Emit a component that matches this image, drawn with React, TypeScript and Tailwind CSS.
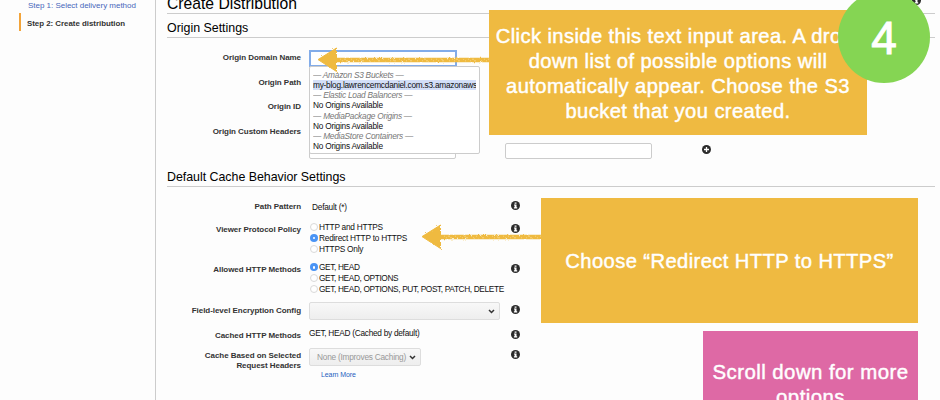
import type { ReactNode } from "react";

function InfoIcon() {
  return (
    <svg className="block h-[9px] w-[9px] shrink-0" viewBox="0 0 18 18" aria-hidden="true">
      <circle cx="9" cy="9" r="9" fill="#2b2b2b" />
      <path d="M7.2 2.8h3.8v2.8H7.2zM6 7h5v5.6h1.4v2.2H5.8v-2.2h1.4V9.2H6z" fill="#fff" />
    </svg>
  );
}

function PlusIcon() {
  return (
    <svg className="block h-[9px] w-[9px] shrink-0" viewBox="0 0 18 18" aria-hidden="true">
      <circle cx="9" cy="9" r="9" fill="#2b2b2b" />
      <path d="M9 4v10M4 9h10" stroke="#fff" strokeWidth="2.6" />
    </svg>
  );
}

function Chevron() {
  return (
    <svg className="block h-[5px] w-[7px] shrink-0" viewBox="0 0 7 5" aria-hidden="true">
      <path d="M1 1l2.5 2.5L6 1" fill="none" stroke="#333" strokeWidth="1.5" />
    </svg>
  );
}

function Row({
  label,
  height,
  info = false,
  children,
}: {
  label: ReactNode;
  height: string;
  info?: boolean;
  children?: ReactNode;
}) {
  return (
    <div className={`flex items-start ${height}`}>
      <div className="w-[134px] shrink-0 pt-[0.5px] text-right text-[8px] font-bold leading-[10px] tracking-[-0.05px] text-[#333]">
        {label}
      </div>
      <div className="ml-2 w-[202px] shrink-0">{children}</div>
      {info && <InfoIcon />}
    </div>
  );
}

function Radio({ label, checked = false }: { label: string; checked?: boolean }) {
  return (
    <div className="flex h-[10.7px] items-center whitespace-nowrap">
      {checked ? (
        <span className="flex h-2 w-2 shrink-0 items-center justify-center rounded-full bg-[#4a94f5]">
          <span className="h-[2.5px] w-[2.5px] rounded-full bg-white" />
        </span>
      ) : (
        <span className="h-2 w-2 shrink-0 rounded-full border border-[#d9d9d9] bg-white" />
      )}
      <span className="ml-px">{label}</span>
    </div>
  );
}

function RoughArrow({ className, width }: { className: string; width: number }) {
  return (
    <svg className={className} width={width} height="28" viewBox={`0 0 ${width} 28`} aria-hidden="true">
      <filter id={`rough-${width}`} x="-5%" y="-10%" width="110%" height="120%">
        <feTurbulence type="fractalNoise" baseFrequency="0.45" numOctaves="2" seed="4" />
        <feDisplacementMap in="SourceGraphic" scale="2.5" />
      </filter>
      <g filter={`url(#rough-${width})`}>
        <path d={`M17 15H${width}`} stroke="#efba41" strokeWidth="4.4" />
        <path d="M2 14.6L20.5 3V26.5Z" fill="#efba41" stroke="#efba41" strokeLinejoin="round" />
        <path
          d={`M24 14.2H${width}M26 15.8H${width}`}
          stroke="#fff3d0"
          strokeWidth="0.6"
          strokeDasharray="1 3 2 5 1 4"
          opacity="0.7"
        />
      </g>
    </svg>
  );
}

const origins = [
  { group: "Amazon S3 Buckets", value: "my-blog.lawrencemcdaniel.com.s3.amazonaws.com", active: true },
  { group: "Elastic Load Balancers", value: "No Origins Available", active: false },
  { group: "MediaPackage Origins", value: "No Origins Available", active: false },
  { group: "MediaStore Containers", value: "No Origins Available", active: false },
];

export default function App() {
  return (
    <div className="relative flex h-[400px] w-[940px] overflow-hidden bg-[#fdfdfd] font-['Liberation_Sans',Arial,sans-serif] text-[8.3px] leading-[10px] tracking-[-0.24px] text-[#111]">
      <aside className="w-[156px] shrink-0 border-r border-[#ccc] pl-[19px]">
        <div className="h-[13px] pl-[9px] pt-px text-[8px] tracking-[-0.02px] text-[#4767bb]">
          Step 1: Select delivery method
        </div>
        <div className="flex h-[18px] items-center border-l-2 border-[#f3a43a] pl-[6px] pt-[3px] text-[7.9px] font-bold tracking-[-0.02px] text-[#333]">
          Step 2: Create distribution
        </div>
      </aside>

      <main className="w-[779px] shrink-0 pl-[11px]">
        <h1 className="flex h-[14px] items-end border-b border-[#ccc] text-[15.7px] leading-[18px] tracking-normal text-black">
          Create Distribution
        </h1>
        <h2 className="h-[24px] border-b border-[#ccc] pt-[5px] text-[12.4px] leading-[18px] tracking-normal text-black">
          Origin Settings
        </h2>

        <div className="pt-[14px]">
          <Row label="Origin Domain Name" height="h-[25px]">
            <div className="-mt-[2px] h-[17px] w-[148px] border-2 border-[#82ace9] bg-white" />
          </Row>
          <Row label="Origin Path" height="h-[24px]" />
          <Row label="Origin ID" height="h-[25px]" />
          <div className="flex h-[33px] items-start">
            <div className="w-[134px] shrink-0 pt-[0.5px] text-right text-[8px] font-bold tracking-[-0.05px] text-[#333]">
              Origin Custom Headers
            </div>
            <div className="ml-2 mt-[17px] flex items-center">
              <div className="h-4 w-[147px] rounded-[2px] border border-[#ccc] bg-white" />
              <div className="ml-[49px] h-4 w-[147px] rounded-[2px] border border-[#ccc] bg-white" />
              <div className="-mt-[3px] ml-[50px]">
                <PlusIcon />
              </div>
            </div>
          </div>
        </div>

        <h2 className="h-[28px] border-b border-[#ccc] pt-[9px] text-[12.4px] leading-[18px] tracking-[-0.02px] text-black">
          Default Cache Behavior Settings
        </h2>

        <div className="pt-[14px]">
          <Row label="Path Pattern" height="h-[23px]" info>
            <div className="pl-[3px] pt-px">Default (*)</div>
          </Row>
          <Row label="Viewer Protocol Policy" height="h-[40px]" info>
            <div className="-mt-[2px] pl-px">
              <Radio label="HTTP and HTTPS" />
              <Radio label="Redirect HTTP to HTTPS" checked />
              <Radio label="HTTPS Only" />
            </div>
          </Row>
          <Row label="Allowed HTTP Methods" height="h-[41px]" info>
            <div className="-mt-[2px] pl-px tracking-[-0.36px]">
              <Radio label="GET, HEAD" checked />
              <Radio label="GET, HEAD, OPTIONS" />
              <Radio label="GET, HEAD, OPTIONS, PUT, POST, PATCH, DELETE" />
            </div>
          </Row>
          <Row label="Field-level Encryption Config" height="h-[25px]" info>
            <div className="-mt-[3px] flex h-[18px] w-[191px] items-center justify-end rounded-[2px] border border-[#ddd] bg-gradient-to-b from-[#f8f8f8] to-[#eee] pr-[4px] pt-px">
              <Chevron />
            </div>
          </Row>
          <Row label="Cached HTTP Methods" height="h-[20px]" info>
            <div className="-mt-[2px] tracking-[-0.28px]">GET, HEAD (Cached by default)</div>
          </Row>
          <Row
            label={
              <>
                Cache Based on Selected
                <br />
                Request Headers
              </>
            }
            height="h-[50px]"
            info
          >
            <div className="-mt-[2px] flex h-[18px] w-[112px] items-center justify-between rounded-[2px] border border-[#ddd] bg-gradient-to-b from-[#f8f8f8] to-[#eee] pl-[7px] pr-[4px] text-[#999]">
              <span className="whitespace-nowrap">None (Improves Caching)</span>
              <Chevron />
            </div>
            <div className="pl-[12px] pt-[4px] text-[7px] tracking-[-0.1px] text-[#1f5fc0]">Learn More</div>
          </Row>
        </div>
      </main>

      <div className="absolute left-[309px] top-[66px] h-[88px] w-[171px] rounded-[2px] border border-[#ccc] bg-white px-[3px] pt-[3px]">
        {origins.map((origin) => (
          <div key={origin.group} className="h-[20.25px] overflow-hidden whitespace-nowrap leading-[10.1px]">
            <div className="italic text-[#777]">— {origin.group} —</div>
            <div className={origin.active ? "overflow-hidden bg-[#d3dff8]" : "overflow-hidden"}>{origin.value}</div>
          </div>
        ))}
      </div>

      <div className="absolute left-[912px] top-[-4px]">
        <InfoIcon />
      </div>

      <RoughArrow className="absolute left-[316px] top-[45px]" width={174} />
      <RoughArrow className="absolute left-[420px] top-[222px]" width={122} />

      <div className="absolute left-[489px] top-[10px] flex h-[125px] w-[378px] items-center justify-center whitespace-nowrap bg-[#efba41] pt-[2px] text-center text-[20.2px] leading-[25px] tracking-[0.4px] text-white [-webkit-text-stroke:0.45px_white]">
        <p>
          Click inside this text input area. A drop-
          <br />
          down list of possible options will
          <br />
          automatically appear. Choose the S3
          <br />
          bucket that you created.
        </p>
      </div>
      <div className="absolute left-[541px] top-[198px] flex h-[125px] w-[377px] items-center justify-center whitespace-nowrap bg-[#efba41] pt-[2px] text-[20.2px] leading-[25px] tracking-[0.4px] text-white [-webkit-text-stroke:0.45px_white]">
        Choose “Redirect HTTP to HTTPS”
      </div>
      <div className="absolute left-[703px] top-[331px] h-[125px] w-[215px] whitespace-nowrap bg-[#de69a5] pt-[29px] text-center text-[20.4px] leading-[25px] tracking-[0.45px] text-white [-webkit-text-stroke:0.45px_white]">
        Scroll down for more
        <br />
        options
      </div>
      <div className="absolute left-[838px] top-[-9px] flex h-[92px] w-[92px] items-center justify-center rounded-full bg-[#85d553] pt-[2px] text-[46px] text-white [-webkit-text-stroke:1px_white]">
        4
      </div>
    </div>
  );
}
